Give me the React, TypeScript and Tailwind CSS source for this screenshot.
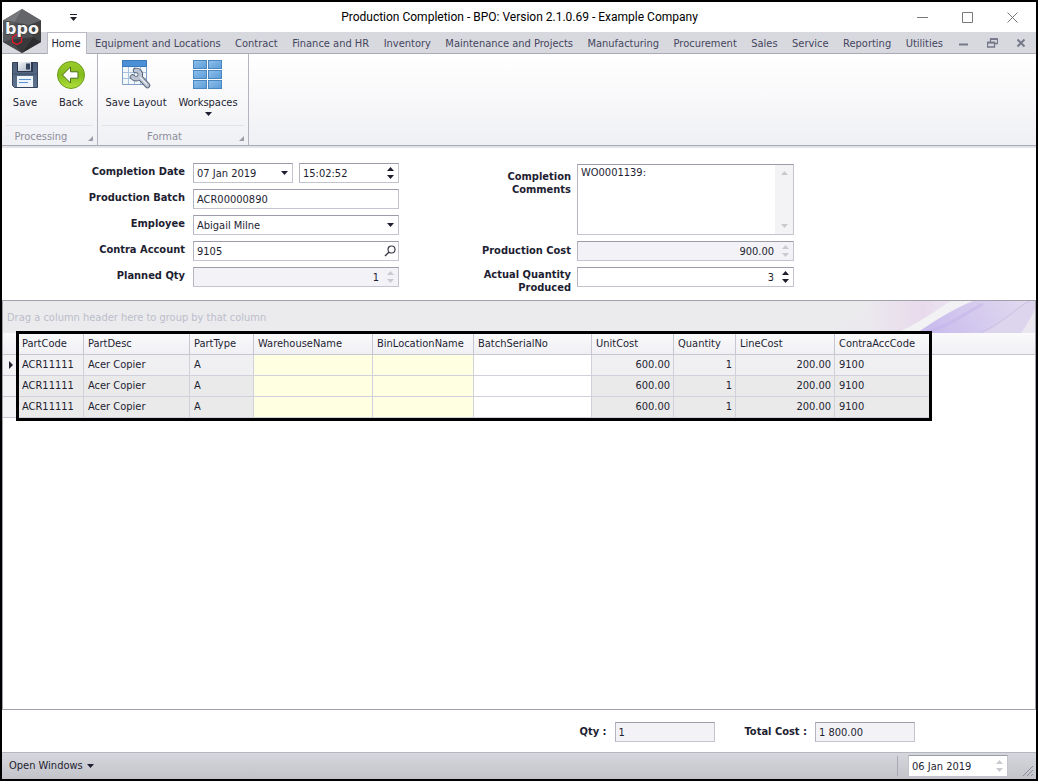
import React from "react";

const tabs = [
  "Equipment and Locations",
  "Contract",
  "Finance and HR",
  "Inventory",
  "Maintenance and Projects",
  "Manufacturing",
  "Procurement",
  "Sales",
  "Service",
  "Reporting",
  "Utilities",
];

const rows = [1, 2, 3].map((id) => ({
  id,
  code: "ACR11111",
  desc: "Acer Copier",
  type: "A",
  unitCost: "600.00",
  quantity: "1",
  lineCost: "200.00",
  contra: "9100",
}));

const columns = [
  { name: "PartCode", width: "w-[66px]" },
  { name: "PartDesc", width: "w-[106px]" },
  { name: "PartType", width: "w-[64px]" },
  { name: "WarehouseName", width: "w-[119px]" },
  { name: "BinLocationName", width: "w-[101px]" },
  { name: "BatchSerialNo", width: "w-[118px]" },
  { name: "UnitCost", width: "w-[82px]" },
  { name: "Quantity", width: "w-[62px]" },
  { name: "LineCost", width: "w-[99px]" },
  { name: "ContraAccCode", width: "w-[95px]" },
];

const fieldBox = "flex h-5 min-w-0 border border-[#c3c4cd] border-t-[#9c9dab] border-l-[#b4b5c0]";
const fieldInput = "min-w-0 flex-1 bg-transparent px-[3px] pt-px text-[11px] leading-4 outline-none";

function DownArrow({ className = "" }: { className?: string }) {
  return (
    <svg width="7" height="4" viewBox="0 0 7 4" className={className} aria-hidden="true">
      <path d="M0 0h7L3.5 4z" fill="currentColor" />
    </svg>
  );
}

function Spinner({ muted = false }: { muted?: boolean }) {
  return (
    <span className={`flex w-4 shrink-0 flex-col items-center justify-center gap-1 ${muted ? "text-[#c9cad0]" : "text-[#1e1e2c]"}`}>
      <button type="button" aria-label="Increase" disabled={muted}>
        <DownArrow className="block rotate-180" />
      </button>
      <button type="button" aria-label="Decrease" disabled={muted}>
        <DownArrow className="block" />
      </button>
    </span>
  );
}

function Logo() {
  return (
    <svg width="42" height="46" viewBox="0 0 42 46" className="absolute top-1.5 left-0" aria-label="BPO" role="img">
      <path d="M20 1 39 12.500V34L20 45 1 34V12.500z" fill="#505154" />
      <path d="M20 1 39 12.500 27 17 13 14z" fill="#646568" />
      <path d="M20 1 1 12.500 13 14z" fill="#77787b" />
      <path d="M1 12.500 13 14 8 32 1 34z" fill="#5a5b5e" />
      <path d="M39 12.500V34L31 29 27 17z" fill="#3f4043" />
      <path d="M20 45 8 32 31 29z" fill="#39393c" />
      <path d="M20 45 39 34 31 29z" fill="#2c2c2f" />
      <path d="M1 34 8 32 20 45z" fill="#48494c" />
      <path d="M15 26.500 19.500 29V34L15 36.500 10.500 34V29z" fill="none" stroke="#e01b28" strokeWidth="1.300" />
      <text
        x="20"
        y="26"
        textAnchor="middle"
        fontFamily="DejaVu Sans"
        fontWeight="700"
        fontSize="16"
        fill="#f4f4f4"
        stroke="#2f3033"
        strokeWidth="1"
        paintOrder="stroke"
      >
        bpo
      </text>
    </svg>
  );
}

function SaveIcon() {
  return (
    <svg width="30" height="30" viewBox="0 0 30 30" aria-hidden="true">
      <defs>
        <linearGradient id="disk" x1="0" y1="0" x2="0" y2="1">
          <stop offset="0" stopColor="#4d5d78" />
          <stop offset="1" stopColor="#5f7390" />
        </linearGradient>
        <linearGradient id="shutter" x1="0" y1="0" x2="1" y2="1">
          <stop offset="0" stopColor="#f4f6f9" />
          <stop offset="1" stopColor="#a9b3c2" />
        </linearGradient>
      </defs>
      <path d="M2.500 2.500h25v25H4.500l-2-2z" fill="url(#disk)" stroke="#35435c" />
      <path d="M7 2h16v10H7z" fill="#2c3850" />
      <path d="M8 2h13v9H8z" fill="url(#shutter)" />
      <path d="M16 3.500h4v6h-4z" fill="#33415c" />
      <path d="M7 16h16v11H7z" fill="#eef4fb" />
      <path d="M9 19.500h12M9 22.500h9" stroke="#5b93d0" strokeWidth="1.200" />
      <path d="M3.500 14h23" stroke="#3d4c66" />
    </svg>
  );
}

function BackIcon() {
  return (
    <svg width="30" height="30" viewBox="0 0 30 30" aria-hidden="true">
      <defs>
        <linearGradient id="back" x1="0" y1="0" x2="0" y2="1">
          <stop offset="0" stopColor="#9ccb2c" />
          <stop offset="0.500" stopColor="#84bd1c" />
          <stop offset="1" stopColor="#b2e03a" />
        </linearGradient>
      </defs>
      <circle cx="15" cy="15" r="13.500" fill="url(#back)" stroke="#6b9c1e" />
      <path d="M6.500 15 14.500 7v4.800H22v6.400h-7.500V23z" fill="#fff" stroke="#4c6e18" strokeLinejoin="round" />
    </svg>
  );
}

function LayoutIcon() {
  return (
    <svg width="30" height="30" viewBox="0 0 30 30" aria-hidden="true">
      <path d="M1.500.5h24v24h-24z" fill="#f3f8fd" stroke="#7f9fc4" />
      <path d="M1.500.5h24v6h-24z" fill="#4b8fd6" stroke="#3a78b8" />
      <path d="M2 12.500h23M2 18.500h23M7.500 7v17M13.500 7v17M19.500 7v17" stroke="#a9c3df" />
      <g fill="none" strokeLinejoin="round">
        <path d="M14.500 10.500c3-.5 5.500 2 4.700 5.200-.8 3-5 4.300-7.700 1.300M19 17.500l7.500 8" stroke="#56647a" strokeWidth="5.500" strokeLinecap="round" />
        <path d="M14.500 10.500c3-.5 5.500 2 4.700 5.200-.8 3-5 4.300-7.700 1.300M19 17.500l7.500 8" stroke="#bcc5d1" strokeWidth="3.700" strokeLinecap="round" />
        <path d="m19 17 7 7.500" stroke="#e8ecf1" strokeWidth="1.200" />
      </g>
    </svg>
  );
}

function WorkspacesIcon() {
  return (
    <svg width="30" height="30" viewBox="0 0 30 30" aria-hidden="true">
      <defs>
        <linearGradient id="tile" x1="0" y1="0" x2="1" y2="1">
          <stop offset="0" stopColor="#8fc0ea" />
          <stop offset="1" stopColor="#5b9bd8" />
        </linearGradient>
      </defs>
      {[0.5, 10.5, 20.5].map((y) =>
        [0.5, 15.5].map((x) => (
          <rect key={`${x}-${y}`} x={x} y={y} width="13" height="8" fill="url(#tile)" stroke="#4a86c0" />
        )),
      )}
    </svg>
  );
}

function RibbonGroup({ title, className, children }: { title: string; className: string; children: React.ReactNode }) {
  return (
    <section className={`flex flex-col border-r border-[#b3b4be] ${className}`}>
      <div className="flex flex-1 items-start pt-1.5">{children}</div>
      <div className="mx-1 flex h-5 items-center border-t border-[#e2e3e9] text-[#8d8e9a]">
        <span className="flex-1 pt-0.5 pr-3 text-center">{title}</span>
        <button type="button" aria-label={`${title} options`} className="self-end pb-1">
          <svg width="5" height="5" viewBox="0 0 5 5" className="block" aria-hidden="true">
            <path d="M5 0v5H0z" fill="#9c9da8" />
          </svg>
        </button>
      </div>
    </section>
  );
}

function RibbonButton({ label, icon, className, menu }: { label: string; icon: React.ReactNode; className: string; menu?: boolean }) {
  return (
    <button type="button" className={`flex flex-col items-center whitespace-nowrap ${className}`}>
      {icon}
      <span className="mt-[5px] leading-4">{label}</span>
      {menu && <DownArrow className="mt-px" />}
    </button>
  );
}

function Label({ htmlFor, children, className = "" }: { htmlFor: string; children: React.ReactNode; className?: string }) {
  return (
    <label htmlFor={htmlFor} className={`text-right font-bold leading-[13px] ${className}`}>
      {children}
    </label>
  );
}

function Swoosh() {
  return (
    <svg width="220" height="32" viewBox="0 0 220 32" preserveAspectRatio="none" className="shrink-0" aria-hidden="true">
      <defs>
        <linearGradient id="pink" x1="0" y1="0" x2="1" y2="0">
          <stop offset="0" stopColor="#ebebee" />
          <stop offset="0.400" stopColor="#ebe8ee" />
          <stop offset="0.800" stopColor="#e8daec" />
          <stop offset="1" stopColor="#ebe5ef" />
        </linearGradient>
        <linearGradient id="violet" x1="0" y1="0.200" x2="1" y2="0">
          <stop offset="0" stopColor="#cabdee" />
          <stop offset="0.500" stopColor="#d6ccee" />
          <stop offset="1" stopColor="#e2dcef" />
        </linearGradient>
      </defs>
      <path d="M0 32C40 22 50 8 56 0H136C118 12 100 24 82 32z" fill="url(#pink)" />
      <path d="M82 32C100 24 118 12 136 0H158C138 8 116 22 102 32z" fill="#f2f2f5" />
      <path d="M102 32C116 22 138 8 158 0H220V32z" fill="url(#violet)" />
      <path d="M112 31C135 25 150 12 168 3" stroke="#bfb0e8" strokeWidth="3" fill="none" opacity="0.400" />
      <path d="M166 32C188 22 200 8 214 0H220V32z" fill="#ddd5ee" />
      <path d="M166 32C188 22 200 8 214 0" stroke="#cbbfe2" fill="none" />
      <path d="M206 32C212 24 217 14 220 8V32z" fill="#eae7f0" />
    </svg>
  );
}

export default function App() {
  const cell = "border-r border-b border-[#d0d1da] pr-[3px] pl-1 font-normal";
  return (
    <div className="relative flex min-h-screen flex-col border-2 border-black bg-white font-['DejaVu_Sans_Condensed','DejaVu_Sans',sans-serif] text-[11px] leading-4 text-[#1e1e32]">
      <header className="bg-white">
        <div className="flex h-[30px] items-center">
          <button type="button" aria-label="Customize quick access toolbar" className="ml-[68px] flex w-8 flex-col gap-0.5 text-[#1e1e2c]">
            <span className="h-px w-[7px] bg-current" />
            <DownArrow />
          </button>
          <h1 className="flex-1 pl-5 text-center font-[Roboto,sans-serif] text-[12px] text-black">
            Production Completion - BPO: Version 2.1.0.69 - Example Company
          </h1>
          <div className="flex items-center gap-[34px] pr-[18px] text-[#77777c]">
            <button type="button" aria-label="Minimize">
              <svg width="11" height="11" viewBox="0 0 11 11" className="block"><path d="M0 5.500h11" stroke="currentColor" /></svg>
            </button>
            <button type="button" aria-label="Maximize">
              <svg width="11" height="11" viewBox="0 0 11 11" className="block"><path d="M.5.5h10v10H.5z" fill="none" stroke="currentColor" /></svg>
            </button>
            <button type="button" aria-label="Close">
              <svg width="11" height="11" viewBox="0 0 11 11" className="block"><path d="m.5.5 10 10m0-10-10 10" stroke="currentColor" /></svg>
            </button>
          </div>
        </div>
        <nav className="flex h-[22px] border-b border-[#a9aab4] bg-[#d8d9df] pl-[45px] text-[#45465e]">
          <a href="#home" className="-mb-px flex w-10 items-center justify-center border-x border-t border-[#b9bac4] bg-white pr-0.5 pt-px text-[#1e1e32]">
            Home
          </a>
          <div className="flex max-w-[870px] flex-1 items-center justify-between pt-[3px] pr-3.5 pl-2">
            {tabs.map((t) => (
              <a key={t} href={`#${t.toLowerCase().replace(/ /g, "-")}`} className="whitespace-nowrap">
                {t}
              </a>
            ))}
          </div>
          <div className="ml-auto flex items-center gap-[18px] pr-2.5 text-[#77788a]">
            <button type="button" aria-label="Minimize document">
              <svg width="10" height="10" viewBox="0 0 10 10" className="block"><path d="M0 6.500h9" stroke="currentColor" strokeWidth="2" /></svg>
            </button>
            <button type="button" aria-label="Restore document">
              <svg width="11" height="10" viewBox="0 0 11 10" className="block">
                <path d="M3.500 4V1h7v4.500H8M.5 4.500h7V9h-7z" fill="none" stroke="currentColor" strokeWidth="1.300" />
                <path d="M3 1.200h8M0 4.700h8" stroke="currentColor" strokeWidth="1.800" />
              </svg>
            </button>
            <button type="button" aria-label="Close document">
              <svg width="10" height="10" viewBox="0 0 10 10" className="block"><path d="m1.500 1.500 7 7m0-7-7 7" stroke="currentColor" strokeWidth="2" /></svg>
            </button>
          </div>
        </nav>
        <Logo />
      </header>

      <div className="flex h-[94px] border-b-2 border-[#e3e4e9] bg-linear-to-b from-white via-[#f8f8fa] to-[#eff0f4]">
        <div className="flex flex-1 border-b border-[#a9aab4]">
          <RibbonGroup title="Processing" className="w-24">
            <RibbonButton label="Save" icon={<SaveIcon />} className="w-[46px]" />
            <RibbonButton label="Back" icon={<BackIcon />} className="w-[46px]" />
          </RibbonGroup>
          <RibbonGroup title="Format" className="w-[151px]">
            <RibbonButton label="Save Layout" icon={<LayoutIcon />} className="w-[76px]" />
            <RibbonButton label="Workspaces" icon={<WorkspacesIcon />} className="w-[68px]" menu />
          </RibbonGroup>
        </div>
      </div>

      <form className="flex items-start gap-[76px] pb-[13px] pt-[15px]" onSubmit={(e) => e.preventDefault()}>
        <div className="grid grid-cols-[183px_206px] gap-x-2 gap-y-1.5">
          <Label htmlFor="date" className="pt-0.5">Completion Date</Label>
          <div className="flex gap-1.5">
            <div className={`${fieldBox} w-[100px] items-center bg-white`}>
              <input id="date" defaultValue="07 Jan 2019" className={fieldInput} />
              <button type="button" aria-label="Open calendar" className="px-1">
                <DownArrow />
              </button>
            </div>
            <div className={`${fieldBox} flex-1 bg-white`}>
              <input aria-label="Completion time" defaultValue="15:02:52" className={fieldInput} />
              <Spinner />
            </div>
          </div>

          <Label htmlFor="batch" className="pt-0.5">Production Batch</Label>
          <div className={`${fieldBox} bg-white`}>
            <input id="batch" defaultValue="ACR00000890" className={fieldInput} />
          </div>

          <Label htmlFor="employee" className="pt-0.5">Employee</Label>
          <div className={`${fieldBox} relative items-center bg-white`}>
            <select id="employee" className={`${fieldInput} appearance-none`}>
              <option>Abigail Milne</option>
            </select>
            <DownArrow className="pointer-events-none absolute right-1" />
          </div>

          <Label htmlFor="contra" className="pt-0.5">Contra Account</Label>
          <div className={`${fieldBox} items-center bg-white`}>
            <input id="contra" defaultValue="9105" className={fieldInput} />
            <button type="button" aria-label="Find account" className="pr-0.5">
              <svg width="12" height="12" viewBox="0 0 12 12" className="block" aria-hidden="true">
                <circle cx="7.500" cy="4.500" r="3.500" fill="none" stroke="#3a3a48" strokeWidth="1.200" />
                <path d="M5 7 1 11" stroke="#3a3a48" strokeWidth="1.400" />
              </svg>
            </button>
          </div>

          <Label htmlFor="planned" className="pt-0.5">Planned Qty</Label>
          <div className={`${fieldBox} bg-[#f3f3f7]`}>
            <input id="planned" readOnly value="1" className={`${fieldInput} text-right`} />
            <Spinner muted />
          </div>
        </div>

        <div className="-mb-2 grid grid-cols-[96px_217px] gap-x-1.5 gap-y-1.5 pt-px">
          <Label htmlFor="comments" className="pt-1.5">Completion Comments</Label>
          <div className="flex h-[71px] border border-[#c3c4cd] border-t-[#9c9dab] border-l-[#b4b5c0] bg-white">
            <textarea
              id="comments"
              defaultValue="WO0001139:"
              className="min-w-0 flex-1 resize-none overflow-hidden bg-transparent px-[3px] text-[11px] leading-4 outline-none"
            />
            <div className="flex w-[18px] flex-col items-center justify-between bg-[#f3f3f6] py-1.5 text-[#c9cad0]">
              <DownArrow className="rotate-180" />
              <DownArrow />
            </div>
          </div>

          <Label htmlFor="cost" className="pt-[3px]">Production Cost</Label>
          <div className={`${fieldBox} bg-[#f3f3f7]`}>
            <input id="cost" readOnly value="900.00" className={`${fieldInput} text-right`} />
            <Spinner muted />
          </div>

          <Label htmlFor="actual" className="pt-px">Actual Quantity Produced</Label>
          <div className={`${fieldBox} bg-white`}>
            <input id="actual" defaultValue="3" className={`${fieldInput} text-right`} />
            <Spinner />
          </div>
        </div>
      </form>

      <main className="flex flex-1 flex-col border border-[#a0a1aa]">
        <div className="flex h-8 items-center justify-between bg-[#ebebee]">
          <span className="pt-0.5 pl-1 text-[#bcbdca]">Drag a column header here to group by that column</span>
          <Swoosh />
        </div>
        <div className="relative">
          <table className="w-full table-fixed border-separate border-spacing-0">
            <thead>
              <tr className="h-[22px] bg-linear-to-b from-[#fafafc] to-[#f0f0f4] text-left">
                <th className="w-[15px] border-r border-b border-[#c6c7d0]" aria-label="Current row" />
                {columns.map((c) => (
                  <th key={c.name} className={`${c.width} whitespace-nowrap border-r border-b border-[#c6c7d0] pr-[3px] pl-1 font-normal`}>
                    {c.name}
                  </th>
                ))}
                <th className="border-b border-[#c6c7d0]" aria-label="Unused" />
              </tr>
            </thead>
            <tbody>
              {rows.map((r, i) => {
                const tone = i === 0 ? "bg-[#f0f0f3]" : "bg-[#eaeaea]";
                return (
                  <tr key={r.id} className="h-[21px]">
                    <td className="border-r border-b border-[#c6c7d0] bg-[#f4f4f7]">
                      {i === 0 && (
                        <svg width="4" height="8" viewBox="0 0 4 8" className="ml-1.5 block" aria-label="Current">
                          <path d="M0 0v8l4-4z" fill="#1e1e2c" />
                        </svg>
                      )}
                    </td>
                    <td className={`${cell} ${tone}`}>{r.code}</td>
                    <td className={`${cell} ${tone}`}>{r.desc}</td>
                    <td className={`${cell} ${tone}`}>{r.type}</td>
                    <td className={`${cell} bg-[#ffffe1]`} />
                    <td className={`${cell} bg-[#ffffe1]`} />
                    <td className={cell} />
                    <td className={`${cell} ${tone} text-right`}>{r.unitCost}</td>
                    <td className={`${cell} ${tone} text-right`}>{r.quantity}</td>
                    <td className={`${cell} ${tone} text-right`}>{r.lineCost}</td>
                    <td className={`${cell} ${tone}`}>{r.contra}</td>
                    <td />
                  </tr>
                );
              })}
            </tbody>
          </table>
          <div className="pointer-events-none absolute -top-0.5 -bottom-[3px] left-[13px] w-[916px] border-3 border-black" />
        </div>
      </main>

      <div className="flex h-[42px] items-center justify-end pt-0.5 pr-[121px]">
        <label htmlFor="qty" className="pr-2 font-bold">Qty :</label>
        <div className={`${fieldBox} w-[100px] bg-[#f3f3f7]`}>
          <input id="qty" readOnly value="1" className={fieldInput} />
        </div>
        <label htmlFor="total" className="pr-2 pl-[30px] font-bold">Total Cost :</label>
        <div className={`${fieldBox} w-[100px] bg-[#f3f3f7]`}>
          <input id="total" readOnly value="1 800.00" className={fieldInput} />
        </div>
      </div>

      <footer className="flex h-[27px] items-center border-t border-[#b5b6be] bg-linear-to-b from-[#d6d7dc] to-[#c3c4ca] pl-[7px]">
        <button type="button" className="flex items-center gap-1">
          Open Windows
          <DownArrow />
        </button>
        <div className="ml-auto flex items-center">
          <span className="mr-2.5 h-5 w-px bg-[#a9aab2]" />
          <div className="flex h-[22px] w-[100px] items-center border border-[#c3c4cd] border-t-[#9c9dab] bg-white">
            <input aria-label="Working date" defaultValue="06 Jan 2019" className={fieldInput} />
            <Spinner muted />
          </div>
          <svg width="12" height="12" viewBox="0 0 12 12" className="mr-0.5 ml-3.5 self-end" aria-hidden="true">
            <path d="M1 11 11 1M5 11l6-6M9 11l2-2" stroke="#8b8c96" />
          </svg>
        </div>
      </footer>
    </div>
  );
}
